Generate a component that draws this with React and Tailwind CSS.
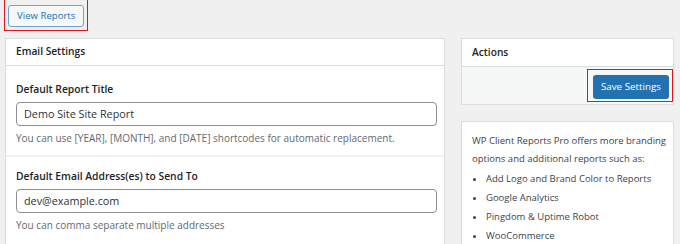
import React from 'react';

const font = { fontFamily: '"Open Sans", "Noto Sans", sans-serif' };

const Field = ({ label, value, help, top, last }) => (
  <div className={`px-[10px] ${top} ${last ? 'pb-[30px]' : 'pb-[9px] border-b-2 border-[#f0f0f1]'}`}>
    <div className="text-[10.3px] font-semibold text-[#1d2327] leading-[16px]">{label}</div>
    <div className="mt-[5px] h-[24px] w-[421px] border border-[#8c8f94] rounded-[4px] bg-white px-[7px] flex items-center text-[10.8px] text-[#2c3338]">
      {value}
    </div>
    <div className="mt-[4px] text-[10px] text-[#646970] leading-[16px]">{help}</div>
  </div>
);

export default function App() {
  return (
    <div className="w-[680px] h-[244px] overflow-hidden bg-[#f0f0f1]" style={font}>
      <div className="pl-[4px] h-[38px]">
        <div className="inline-flex border-[1.5px] border-t-0 border-[#e3141c] px-[3px] pt-[5px] pb-[3px]">
          <button className="h-[22px] px-[8px] border border-[#6da3cf] rounded-[3px] bg-[#f6f7f7] text-[#2271b1] text-[9.6px] leading-none">
            View Reports
          </button>
        </div>
      </div>
      <div className="flex items-start pl-[5px] gap-[16px]">
        <div className="w-[440px] bg-white border border-[#dcdcde]">
          <div className="h-[27px] px-[10px] flex items-center border-b border-[#dcdcde] text-[10.2px] font-semibold text-[#1d2327]">
            Email Settings
          </div>
          <Field
            top="pt-[15px]"
            label="Default Report Title"
            value="Demo Site Site Report"
            help="You can use [YEAR], [MONTH], and [DATE] shortcodes for automatic replacement."
          />
          <Field
            top="pt-[11px]"
            label="Default Email Address(es) to Send To"
            value="dev@example.com"
            help="You can comma separate multiple addresses"
            last
          />
        </div>
        <div className="w-[213px] flex flex-col gap-[16px]">
          <div className="bg-white border border-[#dcdcde]">
            <div className="h-[27px] px-[10px] flex items-center text-[10.2px] font-semibold text-[#1d2327]">
              Actions
            </div>
            <div className="h-[38px] bg-[#f6f7f7] border-t border-[#dcdcde] flex items-center justify-end">
              <div className="border-[1.5px] border-[#e3141c] pl-[5px] pr-[3px] py-[2px]">
                <button className="h-[24px] px-[8px] rounded-[3px] bg-[#2271b1] text-white text-[9.8px] leading-none">
                  Save Settings
                </button>
              </div>
            </div>
          </div>
          <div className="bg-white border border-[#dcdcde] pl-[10px] pr-[4px] pt-[10px] pb-[20px] text-[9.5px] text-[#3c434a] leading-[18px]">
            <p>WP Client Reports Pro offers more branding options and additional reports such as:</p>
            <ul className="mt-[1px] list-disc pl-[14px] leading-[19px]">
              <li>Add Logo and Brand Color to Reports</li>
              <li>Google Analytics</li>
              <li>Pingdom &amp; Uptime Robot</li>
              <li>WooCommerce</li>
            </ul>
          </div>
        </div>
      </div>
    </div>
  );
}
